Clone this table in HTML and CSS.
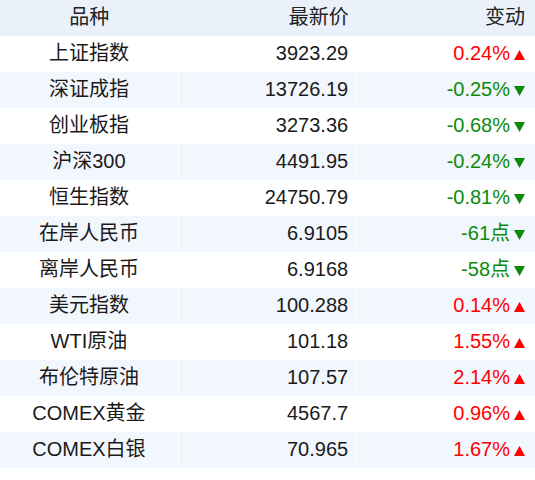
FILE: index.html
```html
<!DOCTYPE html>
<html lang="zh">
<head>
<meta charset="utf-8">
<link rel="stylesheet" href="styles.css">
</head>
<body>
<table class="quotes">
  <thead>
    <tr><th class="name">品种</th><th class="price">最新价</th><th class="chg">变动</th></tr>
  </thead>
  <tbody>
    <tr><td class="name">上证指数</td><td class="price">3923.29</td><td class="chg up">0.24%<svg class="tri" viewBox="0 0 10 9"><path d="M5 0L10 9H0Z"/></svg></td></tr>
    <tr><td class="name">深证成指</td><td class="price">13726.19</td><td class="chg down">-0.25%<svg class="tri" viewBox="0 0 10 9"><path d="M0 0H10L5 9Z"/></svg></td></tr>
    <tr><td class="name">创业板指</td><td class="price">3273.36</td><td class="chg down">-0.68%<svg class="tri" viewBox="0 0 10 9"><path d="M0 0H10L5 9Z"/></svg></td></tr>
    <tr><td class="name">沪深300</td><td class="price">4491.95</td><td class="chg down">-0.24%<svg class="tri" viewBox="0 0 10 9"><path d="M0 0H10L5 9Z"/></svg></td></tr>
    <tr><td class="name">恒生指数</td><td class="price">24750.79</td><td class="chg down">-0.81%<svg class="tri" viewBox="0 0 10 9"><path d="M0 0H10L5 9Z"/></svg></td></tr>
    <tr><td class="name">在岸人民币</td><td class="price">6.9105</td><td class="chg down">-61点<svg class="tri" viewBox="0 0 10 9"><path d="M0 0H10L5 9Z"/></svg></td></tr>
    <tr><td class="name">离岸人民币</td><td class="price">6.9168</td><td class="chg down">-58点<svg class="tri" viewBox="0 0 10 9"><path d="M0 0H10L5 9Z"/></svg></td></tr>
    <tr><td class="name">美元指数</td><td class="price">100.288</td><td class="chg up">0.14%<svg class="tri" viewBox="0 0 10 9"><path d="M5 0L10 9H0Z"/></svg></td></tr>
    <tr><td class="name">WTI原油</td><td class="price">101.18</td><td class="chg up">1.55%<svg class="tri" viewBox="0 0 10 9"><path d="M5 0L10 9H0Z"/></svg></td></tr>
    <tr><td class="name">布伦特原油</td><td class="price">107.57</td><td class="chg up">2.14%<svg class="tri" viewBox="0 0 10 9"><path d="M5 0L10 9H0Z"/></svg></td></tr>
    <tr><td class="name">COMEX黄金</td><td class="price">4567.7</td><td class="chg up">0.96%<svg class="tri" viewBox="0 0 10 9"><path d="M5 0L10 9H0Z"/></svg></td></tr>
    <tr><td class="name">COMEX白银</td><td class="price">70.965</td><td class="chg up">1.67%<svg class="tri" viewBox="0 0 10 9"><path d="M5 0L10 9H0Z"/></svg></td></tr>
  </tbody>
</table>
</body>
</html>
```
FILE: styles.css
```css
html, body {
  margin: 0;
  padding: 0;
  background: #ffffff;
}
.quotes {
  width: 535px;
  border-collapse: collapse;
  table-layout: fixed;
  font-family: "Liberation Sans", Arial, "Noto Sans CJK SC", sans-serif;
  font-size: 20px;
  line-height: 24px;
  color: #1a1a1a;
}
.quotes th,
.quotes td {
  box-sizing: border-box;
  height: 36px;
  padding: 0 0 2px 0;
  font-weight: normal;
  white-space: nowrap;
  vertical-align: middle;
  border-right: 1px solid #ffffff;
}
.quotes th:last-child,
.quotes td:last-child {
  border-right: none;
}
.quotes thead tr {
  background: #eaf1fb;
}
.quotes thead th {
  color: #222222;
  border-right: none;
  padding-bottom: 3px;
}
.quotes tbody tr:nth-child(even) {
  background: #f2f6fd;
}
.quotes .name {
  text-align: center;
}
.quotes .price {
  text-align: right;
  padding-right: 8px;
}
.quotes .chg {
  text-align: right;
  padding-right: 10px;
}
.quotes .up {
  color: #ff0000;
}
.quotes .down {
  color: #0b8a0b;
}
.tri {
  width: 11px;
  height: 10px;
  margin-left: 4px;
  fill: currentColor;
  vertical-align: 0;
}
```
